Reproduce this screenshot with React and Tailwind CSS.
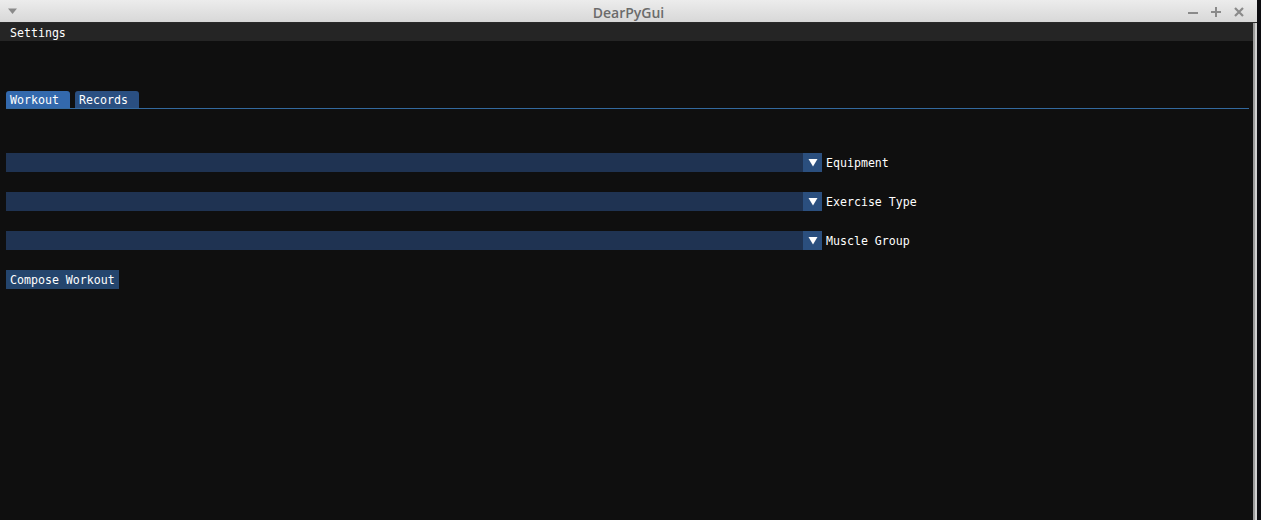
import React from 'react';

const mono = { fontFamily: '"DejaVu Sans Mono", "Liberation Mono", monospace' };

const Arrow = () => (
  <svg width="10" height="9" viewBox="0 0 10 9">
    <polygon points="0.5,1 9.5,1 5,8.5" fill="#ffffff" />
  </svg>
);

const Txt = ({ children }) => (
  <span className="text-[11.6px] text-white leading-none pt-[3px]" style={mono}>{children}</span>
);

const Combo = ({ label }) => (
  <div className="flex items-center h-[19px]">
    <div className="flex h-full w-[816px] bg-[#1f3352]">
      <div className="flex-1" />
      <div className="w-[19px] h-full bg-[#2b4f7e] flex items-center justify-center">
        <Arrow />
      </div>
    </div>
    <span className="ml-[4px] flex"><Txt>{label}</Txt></span>
  </div>
);

const TitleBar = () => (
  <div className="relative h-[23px] flex items-center justify-center bg-gradient-to-b from-[#ececec] to-[#d8d8d8] border-b border-[#2a2a2a]">
    <svg className="absolute left-[8px] top-[8px]" width="9" height="7" viewBox="0 0 9 7">
      <polygon points="0,0.5 9,0.5 4.5,6" fill="#8a8a8a" />
    </svg>
    <span className="text-[14px] font-semibold text-[#6b6b6b] pt-[2px]" style={{ fontFamily: '"Open Sans", "DejaVu Sans", sans-serif' }}>DearPyGui</span>
    <div className="absolute right-[13px] top-0 h-full flex items-center gap-[13px] pt-[2px]">
      <svg width="10" height="10" viewBox="0 0 10 10">
        <rect x="0" y="5" width="10" height="2" fill="#8a8a8a" />
      </svg>
      <svg width="10" height="10" viewBox="0 0 10 10">
        <rect x="0" y="4" width="10" height="2" fill="#8a8a8a" />
        <rect x="4" y="0" width="2" height="10" fill="#8a8a8a" />
      </svg>
      <svg width="10" height="10" viewBox="0 0 10 10">
        <path d="M1 1 L9 9 M9 1 L1 9" stroke="#8a8a8a" strokeWidth="2.2" />
      </svg>
    </div>
  </div>
);

export default function App() {
  return (
    <div className="w-[1261px] h-[520px] flex bg-[#0c0c10] overflow-hidden">
      <div className="w-[1257px] h-full flex flex-col">
        <TitleBar />
        <div className="flex flex-1">
          <div className="flex-1 flex flex-col bg-[#0f0f0f]">
            <div className="h-[18px] bg-[#252525] flex items-center pl-[10px]">
              <Txt>Settings</Txt>
            </div>
            <div className="pl-[6px] pr-[4px] pt-[50px] flex flex-col">
              <div className="flex gap-[5px] h-[17px] items-end">
                <div className="h-[17px] w-[64px] rounded-t-[3px] bg-[#3369ad] pl-[4px] flex items-center">
                  <Txt>Workout</Txt>
                </div>
                <div className="h-[17px] w-[64px] rounded-t-[3px] bg-[#2a4f81] pl-[4px] flex items-center">
                  <Txt>Records</Txt>
                </div>
              </div>
              <div className="h-px bg-[#33699e]" />
              <div className="mt-[44px] flex flex-col gap-[20px]">
                <Combo label="Equipment" />
                <Combo label="Exercise Type" />
                <Combo label="Muscle Group" />
                <div className="h-[19px] w-[113px] bg-[#24456d] flex items-center pl-[4px]">
                  <Txt>Compose Workout</Txt>
                </div>
              </div>
            </div>
          </div>
          <div className="w-[4px] flex">
            <div className="w-[2px] bg-[#9a9a9a]" />
            <div className="w-[2px] bg-[#d0d0d0]" />
          </div>
        </div>
      </div>
      <div className="w-[4px] h-full bg-[#0c0c10]" />
    </div>
  );
}
